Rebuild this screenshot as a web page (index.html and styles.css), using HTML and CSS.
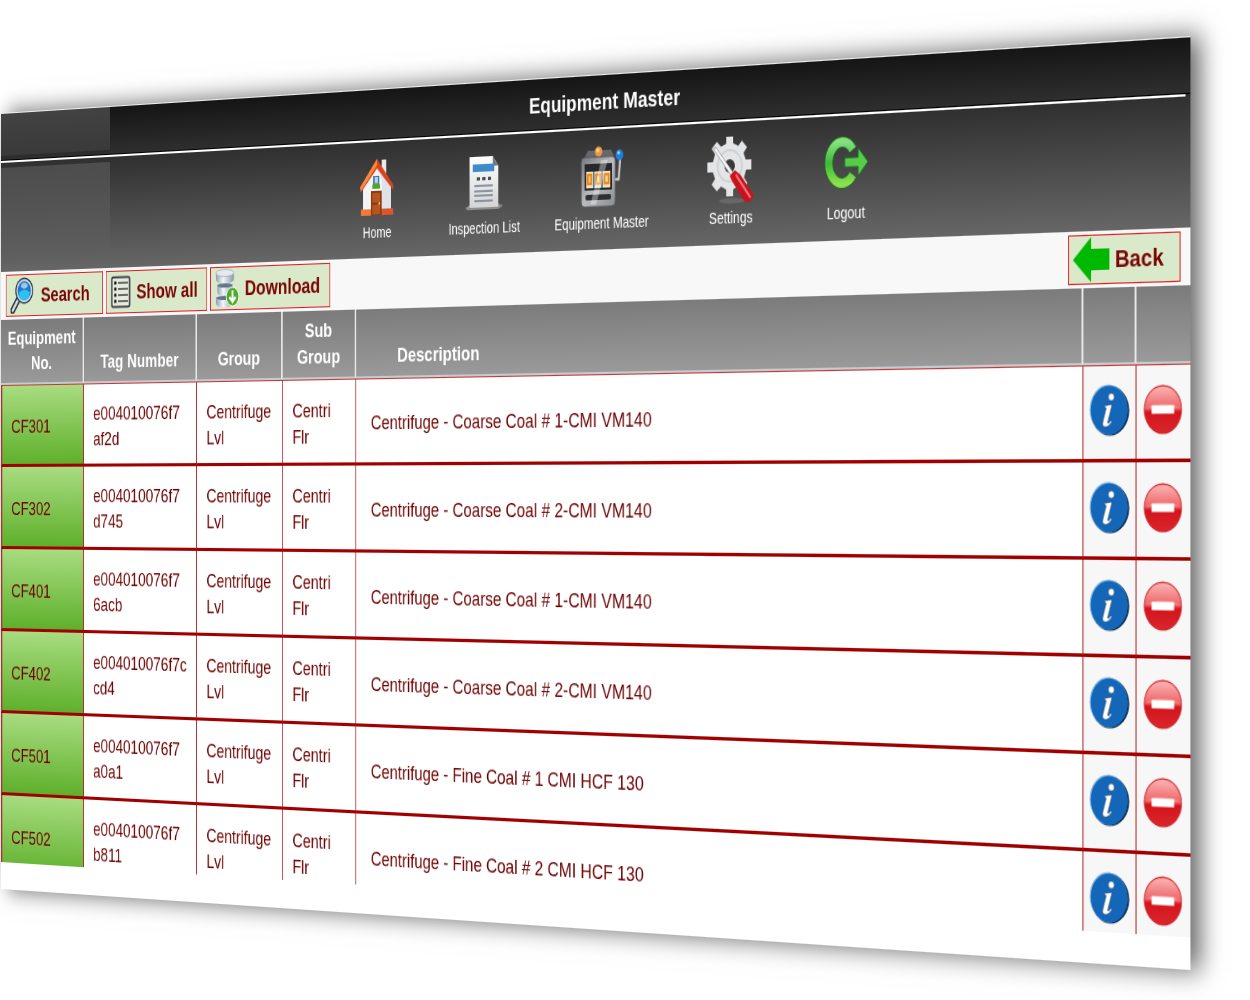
FILE: index.html
```html
<!DOCTYPE html>
<html lang="en">
<head>
<meta charset="UTF-8">
<title>Equipment Master</title>
<link rel="stylesheet" href="styles.css">
</head>
<body>
<!-- shared icons -->
<svg class="sprite" aria-hidden="true">
  <defs>
    <linearGradient id="redTop" x1="0" y1="0" x2="0" y2="1">
      <stop offset="0" stop-color="#f04a50"/>
      <stop offset="0.45" stop-color="#f58a8a"/>
      <stop offset="0.55" stop-color="#d4141c"/>
      <stop offset="1" stop-color="#d8262c"/>
    </linearGradient>
    <linearGradient id="gloss" x1="0" y1="0" x2="0" y2="1">
      <stop offset="0" stop-color="#f9b4b4"/>
      <stop offset="1" stop-color="#ee5f63"/>
    </linearGradient>
    <linearGradient id="steel" x1="0" y1="0" x2="1" y2="0">
      <stop offset="0" stop-color="#8fa0b4"/>
      <stop offset="0.4" stop-color="#f4f7fa"/>
      <stop offset="1" stop-color="#8796a8"/>
    </linearGradient>
    <linearGradient id="paper" x1="0" y1="0" x2="0" y2="1">
      <stop offset="0" stop-color="#ffffff"/>
      <stop offset="1" stop-color="#d4d4d6"/>
    </linearGradient>
    <linearGradient id="metal" x1="0" y1="0" x2="1" y2="1">
      <stop offset="0" stop-color="#77797c"/>
      <stop offset="0.5" stop-color="#b9bbbd"/>
      <stop offset="1" stop-color="#8a8c8e"/>
    </linearGradient>
    <linearGradient id="leaf" x1="0" y1="0" x2="0" y2="1">
      <stop offset="0" stop-color="#86e07e"/>
      <stop offset="0.5" stop-color="#3fb83a"/>
      <stop offset="1" stop-color="#8be04e"/>
    </linearGradient>
  </defs>
  <symbol id="icon-info" viewBox="0 0 42 44">
    <ellipse cx="21.5" cy="22.5" rx="20" ry="21" fill="#0a2f5c"/>
    <ellipse cx="20" cy="21.5" rx="19.5" ry="21" fill="#7fb2e2"/>
    <ellipse cx="20.7" cy="22" rx="19" ry="20.5" fill="#1467b8"/>
    <circle cx="23" cy="11" r="3.2" fill="#fff" stroke="#0a2f5c" stroke-width="0.6"/>
    <path d="M15 18.5l9-1.5-4.5 15c-.3 1.200.5 1.300 1.300.6l1.700-1.900 1.200 1c-2.500 3.500-5 4.800-7.500 4.500-2.200-.3-2.700-2-2.100-4.200l3.300-11c.3-1.200-.4-1.500-2.500-1.500z" fill="#fff" stroke="#0a2f5c" stroke-width="0.6"/>
  </symbol>
  <symbol id="icon-minus" viewBox="0 0 40 42">
    <ellipse cx="20" cy="21" rx="19.500" ry="20.500" fill="#d3232a"/>
    <ellipse cx="20" cy="21" rx="18.500" ry="19.500" fill="url(#redTop)"/>
    <path d="M2 21C2 9 10 2 20 2s18 7 18 19c-5-4-11-5-18-5S7 17 2 21z" fill="url(#gloss)"/>
    <rect x="8.500" y="17.500" width="23" height="7" fill="#fff"/>
  </symbol>
</svg>

<main class="stage">
<div class="panel">
  <div class="title-bar">
    <h1>Equipment Master</h1>
  </div>
  <nav class="menu">
    <a href="#home">
      <svg width="44" height="54" viewBox="0 0 44 54">
        <path d="M28 1h6v16h-6z" fill="#e9e9ea"/>
        <path d="M4 22L22 4l18 20v24H4z" fill="#f3f4f6"/>
        <path d="M22 4l18 20v24H28V20z" fill="#dfe2e6"/>
        <path d="M1 47h42v6H1z" fill="#d9572a"/>
        <path d="M1 47h14v6H1z" fill="#f07a36"/>
        <path d="M22 0L0 26l1 5L22 9l21 21 0-5z" fill="#d8441c"/>
        <path d="M22 0L0 26l1 4L22 6z" fill="#f78a3c"/>
        <path d="M14 30h14v23H14z" fill="#8c3a12"/>
        <path d="M16 32h10v9H16zM16 43h10v9H16z" fill="#b5561f"/>
        <circle cx="25" cy="42" r="1.200" fill="#f4cf6a"/>
        <path d="M17 16h8v10h-8z" fill="#4b76b5"/>
        <path d="M19 17h4v8h-4z" fill="#b9d4f1"/>
        <path d="M16 24q5-3 10 0v4H16z" fill="#52a332"/>
      </svg>
      <span>Home</span>
    </a>
    <a href="#inspection">
      <svg width="48" height="54" viewBox="0 0 48 54">
        <path d="M1 50l6-3h34l7 2-6 3H3z" fill="#8e8f91"/>
        <path d="M6 3h29l7 9v38H6z" fill="url(#paper)"/>
        <path d="M35 3v9h7z" fill="#77797c"/>
        <path d="M10 10h27v7H10z" fill="#3f8bc9"/>
        <path d="M15 22h4v3h-4zM22 22h4v3h-4zM29 22h4v3h-4z" fill="#4b4c50"/>
        <path d="M12 30h23M12 35h23M12 39h23M12 44h23" stroke="#707b8c" stroke-width="1.500"/>
      </svg>
      <span>Inspection List</span>
    </a>
    <a href="#equipment">
      <svg width="54" height="56" viewBox="0 0 54 56">
        <path d="M5 13L11 4h28l5 9z" fill="#66686b"/>
        <rect x="3" y="10" width="41" height="45" rx="4" fill="url(#metal)" stroke="#55575a"/>
        <circle cx="24" cy="5" r="4.500" fill="#f0963a"/>
        <circle cx="23" cy="4" r="1.800" fill="#ffe2b0"/>
        <path d="M7 16h33v24H7z" fill="#26282b"/>
        <path d="M9 23h29v15H9z" fill="#f2e3c0"/>
        <path d="M18 23v15M28 23v15" stroke="#4c7fae" stroke-width="2"/>
        <path d="M11 26h4v8h-4zM21 26h5v8h-5zM31 26h5v8h-5z" fill="none" stroke="#ee8a1d" stroke-width="2.500"/>
        <rect x="8" y="44" width="31" height="5" rx="2" fill="#2e3033"/>
        <path d="M27 13h8L21 53h-7z" fill="#fff" opacity="0.35"/>
        <path d="M44 31h4l2-19" fill="none" stroke="#c6c8ca" stroke-width="2.500"/>
        <ellipse cx="49" cy="9" rx="4.500" ry="5" fill="#1d7fdc"/>
        <circle cx="48" cy="7" r="1.500" fill="#bfe1ff"/>
      </svg>
      <span>Equipment Master</span>
    </a>
    <a href="#settings">
      <svg width="54" height="60" viewBox="0 0 54 60">
        <ellipse cx="29" cy="57" rx="15" ry="2.500" fill="#777" opacity="0.6"/>
        <path d="M22 0h8v6l6 2.500 4-4.500 6 6-4 5 2.500 6H51v9h-6l-2.500 7 4 5-6 6-5-4-5.500 3v6h-8v-6l-6-3-5 4-6-6 4-5L6.500 31H0v-9h6.500L9 15 5 10l6-6 5 4.500 6-2.500z" fill="#e4e5e6"/>
        <circle cx="26" cy="26" r="14" fill="none" stroke="#d0d1d3" stroke-width="2"/>
        <circle cx="26" cy="26" r="6" fill="#3a3a3b"/>
        <path d="M7 10l3-1 20 23-3 2z" fill="#f7f7f8" stroke="#8c8d90" stroke-width="0.800"/>
        <path d="M26 35l6-5 6 4 16 19-5 6-6-1-14-18z" fill="#c8131c"/>
        <path d="M33 34l17 21" stroke="#f3777b" stroke-width="2"/>
      </svg>
      <span>Settings</span>
    </a>
    <a href="#logout">
      <svg width="50" height="60" viewBox="0 0 50 60">
        <path d="M33 17A15 18 0 1 0 33 39" fill="none" stroke="#1f6e22" stroke-width="10"/>
        <path d="M33 17A15 18 0 1 0 33 39" fill="none" stroke="url(#leaf)" stroke-width="8"/>
        <path d="M24 24h15v-8l11 12-11 12v-8H24z" fill="#56cc4b" stroke="#23702a" stroke-width="1"/>
      </svg>
      <span>Logout</span>
    </a>
  </nav>

  <div class="toolbar">
    <button type="button">
      <svg width="36" height="36" viewBox="0 0 36 36">
        <path d="M12 21L3 33" stroke="#222b38" stroke-width="7" stroke-linecap="round"/>
        <path d="M12 21L3 33" stroke="#d9dee4" stroke-width="3" stroke-linecap="round"/>
        <ellipse cx="20" cy="13.500" rx="13" ry="13" fill="#273447"/>
        <ellipse cx="20" cy="13.500" rx="11.500" ry="11.500" fill="#c8d3df"/>
        <ellipse cx="20" cy="13.500" rx="9.500" ry="9.500" fill="#2377c4"/>
        <path d="M12 15q8-5 16 0-1 8-8 8t-8-8z" fill="#29c3f2"/>
        <ellipse cx="20" cy="8.500" rx="5" ry="3" fill="#9cc7ee"/>
      </svg>
      Search
    </button>
    <button type="button">
      <svg width="28" height="32" viewBox="0 0 28 32">
        <rect x="1.500" y="1.500" width="25" height="29" rx="2" fill="#e4ebdc" stroke="#3b3f45" stroke-width="2"/>
        <path d="M10 7h14M10 13h14M10 19h14M10 25h14" stroke="#3b3f45" stroke-width="1.500"/>
        <path d="M5 7h3M5 13h3M5 19h3M5 25h3" stroke="#111" stroke-width="3"/>
      </svg>
      Show all
    </button>
    <button type="button">
      <svg width="32" height="38" viewBox="0 0 34 38" preserveAspectRatio="none">
        <path d="M1 27v6q0 4 13 4t13-4v-6z" fill="url(#steel)"/>
        <path d="M3 15v7q0 4 11 4t11-4v-7z" fill="url(#steel)"/>
        <path d="M1 4v6q0 4 13 4t13-4V4z" fill="url(#steel)"/>
        <ellipse cx="14" cy="4" rx="13" ry="3.500" fill="#e3e9ef" stroke="#9aa8b6" stroke-width="0.800"/>
        <ellipse cx="14" cy="16" rx="11" ry="2" fill="#64748a"/>
        <ellipse cx="14" cy="28" rx="12" ry="2" fill="#64748a"/>
        <circle cx="25" cy="27" r="9" fill="#4cab2b" stroke="#fff"/>
        <path d="M25 21v10M20.500 27.500l4.500 4.500 4.500-4.500" fill="none" stroke="#fff" stroke-width="2.500"/>
      </svg>
      Download
    </button>
    <button type="button" class="back">
      <svg width="38" height="38" viewBox="0 0 38 38">
        <path d="M0 19L19 0v10h19v18H19v10z" fill="#00b800"/>
      </svg>
      Back
    </button>
  </div>

  <div class="list">
    <table>
      <colgroup>
        <col class="col-no"><col class="col-tag"><col class="col-group"><col class="col-sub"><col><col class="col-icon"><col class="col-icon">
      </colgroup>
      <thead>
        <tr>
          <th>Equipment No.</th>
          <th>Tag Number</th>
          <th>Group</th>
          <th>Sub<br>Group</th>
          <th class="desc">Description</th>
          <th></th>
          <th></th>
        </tr>
      </thead>
      <tbody>
        <tr>
          <td class="no">CF301</td>
          <td>e004010076f7<br>af2d</td>
          <td>Centrifuge Lvl</td>
          <td>Centri<br>Flr</td>
          <td class="desc">Centrifuge - Coarse Coal # 1-CMI VM140</td>
          <td class="icon"><button type="button" aria-label="Info"><svg width="42" height="44"><use href="#icon-info"/></svg></button></td>
          <td class="icon"><button type="button" aria-label="Remove"><svg width="40" height="42"><use href="#icon-minus"/></svg></button></td>
        </tr>
        <tr>
          <td class="no">CF302</td>
          <td>e004010076f7<br>d745</td>
          <td>Centrifuge Lvl</td>
          <td>Centri<br>Flr</td>
          <td class="desc">Centrifuge - Coarse Coal # 2-CMI VM140</td>
          <td class="icon"><button type="button" aria-label="Info"><svg width="42" height="44"><use href="#icon-info"/></svg></button></td>
          <td class="icon"><button type="button" aria-label="Remove"><svg width="40" height="42"><use href="#icon-minus"/></svg></button></td>
        </tr>
        <tr>
          <td class="no">CF401</td>
          <td>e004010076f7<br>6acb</td>
          <td>Centrifuge Lvl</td>
          <td>Centri<br>Flr</td>
          <td class="desc">Centrifuge - Coarse Coal # 1-CMI VM140</td>
          <td class="icon"><button type="button" aria-label="Info"><svg width="42" height="44"><use href="#icon-info"/></svg></button></td>
          <td class="icon"><button type="button" aria-label="Remove"><svg width="40" height="42"><use href="#icon-minus"/></svg></button></td>
        </tr>
        <tr>
          <td class="no">CF402</td>
          <td>e004010076f7c<br>cd4</td>
          <td>Centrifuge Lvl</td>
          <td>Centri<br>Flr</td>
          <td class="desc">Centrifuge - Coarse Coal # 2-CMI VM140</td>
          <td class="icon"><button type="button" aria-label="Info"><svg width="42" height="44"><use href="#icon-info"/></svg></button></td>
          <td class="icon"><button type="button" aria-label="Remove"><svg width="40" height="42"><use href="#icon-minus"/></svg></button></td>
        </tr>
        <tr>
          <td class="no">CF501</td>
          <td>e004010076f7<br>a0a1</td>
          <td>Centrifuge Lvl</td>
          <td>Centri<br>Flr</td>
          <td class="desc">Centrifuge - Fine Coal # 1 CMI HCF 130</td>
          <td class="icon"><button type="button" aria-label="Info"><svg width="42" height="44"><use href="#icon-info"/></svg></button></td>
          <td class="icon"><button type="button" aria-label="Remove"><svg width="40" height="42"><use href="#icon-minus"/></svg></button></td>
        </tr>
        <tr>
          <td class="no">CF502</td>
          <td>e004010076f7<br>b811</td>
          <td>Centrifuge Lvl</td>
          <td>Centri<br>Flr</td>
          <td class="desc">Centrifuge - Fine Coal # 2 CMI HCF 130</td>
          <td class="icon"><button type="button" aria-label="Info"><svg width="42" height="44"><use href="#icon-info"/></svg></button></td>
          <td class="icon"><button type="button" aria-label="Remove"><svg width="40" height="42"><use href="#icon-minus"/></svg></button></td>
        </tr>
      </tbody>
    </table>
  </div>
</div>
</main>
</body>
</html>
```
FILE: styles.css
```css
* {
  box-sizing: border-box;
}
body {
  margin: 0;
  background: #fff;
  font-family: "Liberation Sans", Arial, sans-serif;
}
.sprite {
  position: absolute;
  width: 0;
  height: 0;
}
.stage {
  min-height: 100vh;
  padding: 113px 0 0 1px;
  overflow: hidden;
}
/* the whole screen is turned around its left edge */
.panel {
  width: 116%;
  padding-bottom: 27px;
  background: #fff;
  box-shadow: 10px 0 22px rgba(0, 0, 0, 0.6);
  transform: perspective(6264px) rotateY(-47deg);
  transform-origin: left 378px;
}
.title-bar {
  height: 50px;
  padding-left: 31%;
  border-top: 1px solid #eee;
  background:
    linear-gradient(#fff, #fff) 0 100% / calc(100% - 5px) 2px no-repeat,
    linear-gradient(#000, #000) 0 46px / 100% 1px no-repeat,
    linear-gradient(#424242, #3a3a3a) 0 0 / 157px 42px no-repeat,
    linear-gradient(#151515, #303030);
}
h1 {
  width: 704px;
  margin: 0;
  text-align: center;
  color: #fff;
  font-size: 21px;
  line-height: 47px;
}
.menu {
  display: grid;
  grid-template-columns: 138px 134px 154px 152px 110px;
  height: 109px;
  padding: 12px 0 0 31%;
  background:
    linear-gradient(rgba(255, 255, 255, 0.13), rgba(255, 255, 255, 0)) 0 5px / 157px 90px no-repeat,
    linear-gradient(#303030, #666);
}
.menu a {
  display: flex;
  flex-direction: column;
  align-items: center;
  color: #fff;
  font-size: 14px;
  line-height: 22px;
  text-decoration: none;
  white-space: nowrap;
}
.menu svg {
  height: 62px;
}
.toolbar {
  display: flex;
  gap: 4px;
  padding: 3px 10px 3px 7px;
  background: #f8f8f8;
}
.toolbar button {
  display: flex;
  align-items: center;
  gap: 8px;
  min-width: 140px;
  height: 42px;
  padding: 0 12px 0 6px;
  border: 1px solid #e01b22;
  background: #dbe9cb;
  color: #780404;
  font-family: inherit;
  font-size: 21px;
  font-weight: bold;
}
.toolbar .back {
  gap: 6px;
  min-width: 0;
  margin-left: auto;
  padding: 0 16px 0 4px;
}
/* the last row runs past the end of the list */
.list {
  height: 542px;
  overflow: hidden;
}
table {
  width: 100%;
  table-layout: fixed;
  border-spacing: 0;
  font-size: 19px;
  line-height: 25px;
}
.col-no {
  width: 120px;
}
.col-tag {
  width: 158px;
}
.col-group {
  width: 116px;
}
.col-sub {
  width: 97px;
}
.col-icon {
  width: 55px;
}
th {
  height: 65px;
  padding: 0 4px 7px;
  border-right: 2px solid #e8e8e8;
  border-bottom: 2px solid #c3cccf;
  background: linear-gradient(#7b7b7b, #9a9a9a);
  color: #fff;
  vertical-align: bottom;
}
th:last-child {
  border-right: 0;
}
th.desc {
  padding-left: 53px;
  text-align: left;
}
td {
  height: 82px;
  padding: 3px 8px 0 13px;
  border-right: 1px solid #b01717;
  border-bottom: 3px solid #a00000;
  color: #6d0000;
}
tbody tr:first-child td {
  border-top: 1px solid #c33;
}
td:last-child {
  border-right: 0;
}
td.no {
  border-left: 2px solid #a33;
  background: linear-gradient(#a8dc80, #5fb02c);
}
td.desc {
  padding-left: 19px;
}
td.icon {
  padding: 2px 0 0;
  background: #f7f7f7;
  text-align: center;
}
td.icon button {
  padding: 0;
  border: 0;
  background: none;
}
td.icon svg {
  display: block;
}
```
